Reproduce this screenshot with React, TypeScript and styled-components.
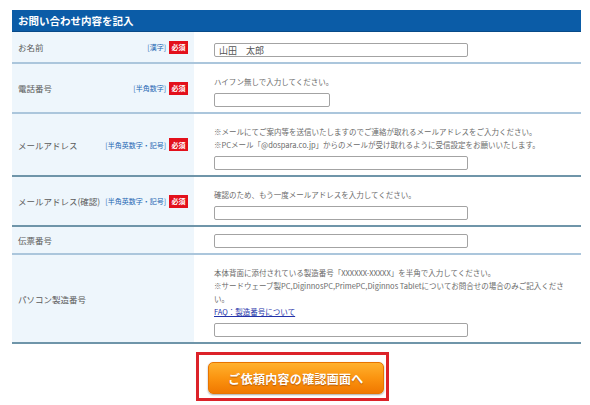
import React from 'react';
import styled, { createGlobalStyle } from 'styled-components';

const GlobalStyle = createGlobalStyle`
  body {
    margin: 0;
    background: #ffffff;
    font-family: "Noto Sans CJK JP", "Noto Sans", sans-serif;
  }
`;

const Page = styled.div`
  width: 569px;
  padding: 10px 0 0 12px;
`;

const Header = styled.h2`
  margin: 0;
  height: 22px;
  line-height: 22px;
  padding-left: 6px;
  background: #0b5ca7;
  border-bottom: 1px solid #084a88;
  box-sizing: border-box;
  color: #ffffff;
  font-size: 10.5px;
  font-weight: bold;
`;

const Row = styled.div<{ $line: 'light' | 'dark' }>`
  display: grid;
  grid-template-columns: 182px 1fr;
  border-bottom: 2px solid ${(p) => (p.$line === 'light' ? '#abc6dc' : '#6f95a9')};
`;

const LabelCell = styled.div`
  display: flex;
  align-items: center;
  padding: 0 6px;
  background: #eef6fc;
  gap: 3px;
`;

const LabelText = styled.span`
  flex: 1;
  font-size: 8.5px;
  color: #5a5a5a;
  white-space: nowrap;
`;

const Tag = styled.span`
  font-size: 7px;
  color: #2467b3;
  white-space: nowrap;
`;

const Required = styled.span`
  display: inline-flex;
  align-items: center;
  justify-content: center;
  width: 19px;
  height: 13px;
  background: #e3101b;
  color: #ffffff;
  font-size: 7px;
  font-weight: bold;
`;

const FieldCell = styled.div<{ $top?: number }>`
  padding: ${(p) => p.$top ?? 11}px 6px 5px 20px;
  background: #ffffff;
`;

const Hint = styled.div`
  font-size: 7.5px;
  line-height: 13px;
  color: #6a6a6a;
  margin-bottom: 5px;
`;

const FaqLink = styled.a`
  color: #2231a8;
  text-decoration: underline;
`;

const TextInput = styled.input<{ $w: number }>`
  display: block;
  width: ${(p) => p.$w}px;
  height: 14px;
  margin: 0;
  padding: 0 4px;
  box-sizing: border-box;
  border: 1px solid #a3a3a3;
  border-radius: 2px;
  background: #ffffff;
  font-family: "Noto Sans CJK JP", sans-serif;
  font-size: 9px;
  color: #555555;
  outline: none;
`;

const Actions = styled.div`
  display: flex;
  justify-content: center;
  padding-top: 8px;
`;

const Highlight = styled.div`
  margin-right: 8px;
  padding: 7px 2px 4px 9px;
  border: 3px solid #dc2229;
`;

const SubmitButton = styled.button`
  width: 176px;
  height: 32px;
  border: 1px solid #e87400;
  border-radius: 5px;
  background: linear-gradient(#ffb12e, #fb9410 50%, #f07800);
  box-shadow: 0 1px 2px rgba(0, 0, 0, 0.35);
  color: #ffffff;
  font-family: "Noto Sans CJK JP", sans-serif;
  font-size: 12px;
  font-weight: bold;
  letter-spacing: 0.3px;
  text-shadow: 0 1px 1px rgba(140, 60, 0, 0.6);
  cursor: pointer;
`;

type Field = {
  label: string;
  tag?: string;
  required?: boolean;
  line: 'light' | 'dark';
  hints?: React.ReactNode[];
  width: number;
  value?: string;
  top?: number;
};

const fields: Field[] = [
  { label: 'お名前', tag: '[漢字]', required: true, line: 'light', width: 254, value: '山田　太郎' },
  {
    label: '電話番号',
    tag: '[半角数字]',
    required: true,
    line: 'light',
    width: 116,
    hints: ['ハイフン無しで入力してください。'],
  },
  {
    label: 'メールアドレス',
    tag: '[半角英数字・記号]',
    required: true,
    line: 'dark',
    width: 254,
    hints: [
      '※メールにてご案内等を送信いたしますのでご連絡が取れるメールアドレスをご入力ください。',
      '※PCメール「@dospara.co.jp」からのメールが受け取れるように受信設定をお願いいたします。',
    ],
  },
  {
    label: 'メールアドレス(確認)',
    tag: '[半角英数字・記号]',
    required: true,
    line: 'dark',
    width: 254,
    hints: ['確認のため、もう一度メールアドレスを入力してください。'],
  },
  { label: '伝票番号', line: 'light', width: 254, top: 7 },
  {
    label: 'パソコン製造番号',
    line: 'dark',
    width: 254,
    hints: [
      '本体背面に添付されている製造番号「XXXXXX-XXXXX」を半角で入力してください。',
      '※サードウェーブ製PC,DiginnosPC,PrimePC,Diginnos Tabletについてお問合せの場合のみご記入ください。',
      <FaqLink href="#" key="faq">FAQ：製造番号について</FaqLink>,
    ],
  },
];

export default function App() {
  return (
    <>
      <GlobalStyle />
      <Page>
        <Header>お問い合わせ内容を記入</Header>
        {fields.map((f) => (
          <Row key={f.label} $line={f.line}>
            <LabelCell>
              <LabelText>{f.label}</LabelText>
              {f.tag && <Tag>{f.tag}</Tag>}
              {f.required && <Required>必須</Required>}
            </LabelCell>
            <FieldCell $top={f.top}>
              {f.hints && (
                <Hint>
                  {f.hints.map((h, i) => (
                    <div key={i}>{h}</div>
                  ))}
                </Hint>
              )}
              <TextInput $w={f.width} defaultValue={f.value} />
            </FieldCell>
          </Row>
        ))}
        <Actions>
          <Highlight>
            <SubmitButton type="button">ご依頼内容の確認画面へ</SubmitButton>
          </Highlight>
        </Actions>
      </Page>
    </>
  );
}
